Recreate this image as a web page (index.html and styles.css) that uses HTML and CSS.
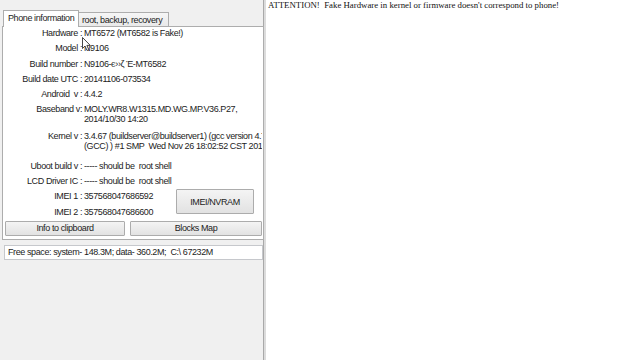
FILE: index.html
```html
<!DOCTYPE html>
<html>
<head>
<meta charset="utf-8">
<link rel="stylesheet" href="styles.css">
</head>
<body>
<div class="app">
  <aside class="left">
    <div class="tabs">
      <div class="tab active">Phone information</div>
      <div class="tab">root, backup, recovery</div>
    </div>
    <div class="page">
      <div class="info">
        <div class="row"><span class="lbl">Hardware :</span><span class="val">MT6572 (MT6582 is Fake!)</span></div>
        <div class="row"><span class="lbl">Model :</span><span class="val">N9106</span></div>
        <div class="row"><span class="lbl">Build number :</span><span class="val">N9106-є››ζ Έ-MT6582</span></div>
        <div class="row"><span class="lbl">Build date UTC :</span><span class="val">20141106-073534</span></div>
        <div class="row"><span class="lbl">Android &nbsp;v :</span><span class="val">4.4.2</span></div>
        <div class="row"><span class="lbl">Baseband v:</span><span class="val">MOLY.WR8.W1315.MD.WG.MP.V36.P27,
2014/10/30 14:20</span></div>
        <div class="row kern"><span class="lbl">Kernel v :</span><span class="val">3.4.67 (buildserver@buildserver1) (gcc version 4.7
(GCC) ) #1 SMP  Wed Nov 26 18:02:52 CST 2014</span></div>
        <div class="row sep"><span class="lbl">Uboot build v :</span><span class="val">----- should be  root shell</span></div>
        <div class="row"><span class="lbl">LCD Driver IC :</span><span class="val">----- should be  root shell</span></div>
      </div>
      <div class="imei">
        <div class="imei-rows">
          <div class="row"><span class="lbl">IMEI 1 :</span><span class="val">357568047686592</span></div>
          <div class="row"><span class="lbl">IMEI 2 :</span><span class="val">357568047686600</span></div>
        </div>
        <button class="btn nvram">IMEI/NVRAM</button>
      </div>
      <div class="actions">
        <button class="btn clip">Info to clipboard</button>
        <button class="btn blocks">Blocks Map</button>
      </div>
    </div>
    <div class="free">Free space: system- 148.3M; data- 360.2M;  C:\ 67232M</div>
    <svg class="cursor" width="10" height="15" viewBox="0 0 10 15"><path d="M0.5 0.5 L0.5 11.5 L3 9 L5 13.5 L6.8 12.7 L4.9 8.4 L8.3 8.4 Z" fill="#fff" stroke="#333" stroke-width="0.9" stroke-linejoin="round"/></svg>
  </aside>
  <main class="right">
    <p class="warn">ATTENTION!&nbsp; Fake Hardware in kernel or firmware doesn't correspond to phone!</p>
  </main>
</div>
</body>
</html>
```
FILE: styles.css
```css
html, body {
  margin: 0;
  padding: 0;
  background: #fff;
}
.app {
  display: flex;
  width: 640px;
  height: 360px;
  overflow: hidden;
  font-family: "Liberation Sans", Arial, sans-serif;
  font-size: 9px;
  letter-spacing: -0.4px;
  color: #1c1c1c;
}
.left {
  position: relative;
  width: 264px;
  flex: none;
  background: #f0f0f0;
  border-right: 1px solid #a9a9a9;
  box-shadow: 2px 0 0 #dcdcdc;
  box-sizing: border-box;
  padding-top: 10px;
}
.tabs {
  display: flex;
  align-items: flex-end;
  margin-left: 3px;
  height: 16px;
  position: relative;
  z-index: 2;
}
.tab {
  box-sizing: border-box;
  border: 1px solid #adadad;
  border-bottom: none;
  line-height: 12px;
  white-space: nowrap;
}
.tab.active {
  width: 76px;
  height: 17px;
  background: #fff;
  padding: 1px 0 0 4px;
  margin-bottom: -1px;
}
.tab:not(.active) {
  width: 90px;
  height: 14px;
  border-left: none;
  background: linear-gradient(#f6f6f6, #e9e9e9);
  padding: 1px 0 0 3px;
}
.page {
  box-sizing: border-box;
  margin-left: 2px;
  width: 262px;
  height: 214px;
  background: #fff;
  border: 1px solid #adadad;
  padding: 1px 1px 0 1px;
}
.info {
  display: flex;
  flex-direction: column;
  gap: 5.3px;
}
.row {
  display: grid;
  grid-template-columns: 78px 1fr;
  column-gap: 2px;
  line-height: 10px;
}
.row.kern {
  margin-top: 1px;
}
.row.sep {
  margin-top: 4.6px;
}
.lbl {
  text-align: right;
  white-space: pre;
}
.val {
  white-space: pre;
  overflow: hidden;
}
.imei {
  display: flex;
  align-items: flex-start;
  margin-top: 5.3px;
}
.imei-rows {
  width: 172px;
  display: flex;
  flex-direction: column;
  gap: 5.3px;
}
.btn {
  box-sizing: border-box;
  font: inherit;
  letter-spacing: inherit;
  color: #1c1c1c;
  background: linear-gradient(#f4f4f4, #e2e2e2);
  border: 1px solid #acacac;
  border-radius: 1px;
  padding: 0;
  margin: 0;
  line-height: 10px;
}
.nvram {
  width: 78px;
  height: 25px;
  margin-top: -2px;
}
.actions {
  display: flex;
  gap: 5px;
  margin-top: 4px;
  padding-left: 1px;
}
.clip {
  width: 120px;
  height: 15px;
}
.blocks {
  width: 132px;
  height: 15px;
}
.free {
  box-sizing: border-box;
  margin: 5px 0 0 4px;
  width: 259px;
  height: 15px;
  background: #fff;
  border: 1px solid #c6c8cc;
  padding: 0 0 0 3px;
  line-height: 13px;
  white-space: pre;
}
.cursor {
  position: absolute;
  left: 82px;
  top: 37px;
}
.right {
  flex: 1;
  margin-left: 2px;
}
.warn {
  margin: 0;
  padding: 0 0 0 2px;
  font-family: "Liberation Serif", "Times New Roman", serif;
  font-size: 8.8px;
  letter-spacing: 0;
  line-height: 10px;
  color: #111;
  white-space: nowrap;
}
```
